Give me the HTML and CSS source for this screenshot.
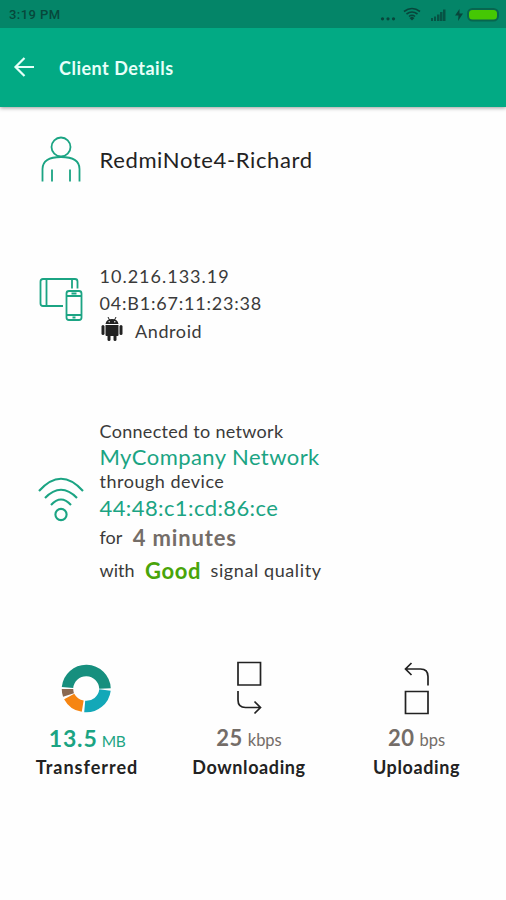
FILE: index.html
```html
<!DOCTYPE html>
<html lang="en">
<head>
<meta charset="utf-8">
<title>Client Details</title>
<link rel="stylesheet" href="styles.css">
</head>
<body>
<header class="header">
  <div class="status">
    <span class="clock">3:19 PM</span>
    <svg class="status-icons" width="124" height="28" viewBox="0 0 124 28">
      <g fill="#08463b"><circle cx="4.500" cy="18.800" r="1.600"/><circle cx="10" cy="18.800" r="1.600"/><circle cx="15.500" cy="18.800" r="1.600"/>
      <path d="M31.500 18L34 16.500L36.500 18L34 20.500Z"/>
      <path d="M53 18h2v3h-2zM56 16.500h2v4.500h-2zM59 14.500h2.500v6.500h-2.500zM62 12h2.500v9h-2.500zM65 9.500h2.500v11.500h-2.500z" opacity=".8"/>
      <path d="M81.500 9L77 15.500h3.500L80 21l5-7.500h-3.500z"/></g>
      <path d="M26 11.500Q34 5.500 42 11.500M28.500 14Q34 10 39.500 14M31 16.500Q34 14 37 16.500" fill="none" stroke="#08463b" stroke-width="1.600"/>
      <rect x="90" y="9" width="30" height="11.500" rx="4.500" fill="#45c804" stroke="#07664f" stroke-width="2"/>
    </svg>
  </div>
  <div class="bar">
    <svg width="22" height="22" viewBox="0 0 22 22" fill="none" stroke="#e5fff8" stroke-width="2.200"><path d="M21 11H3M11.500 2L2.500 11L11.500 20"/></svg>
    <h1 class="title">Client Details</h1>
  </div>
</header>
<main>
  <section class="row row-name">
    <svg class="icon" width="46" height="50" viewBox="0 0 46 50" fill="none" stroke="#1ba483" stroke-width="1.800"><circle cx="23" cy="12" r="9.500"/><path d="M4.500 46.500V34Q4.500 22 23 22Q41.500 22 41.500 34V46.500M14 34.500V46.500M32 34.500V46.500"/></svg>
    <div class="name">RedmiNote4-Richard</div>
  </section>
  <section class="row row-device">
    <svg class="icon" width="46" height="46" viewBox="0 0 46 46" fill="none" stroke="#1ba483" stroke-width="1.800"><path d="M25 29H5Q2.500 29 2.500 26.500V4.500Q2.500 2 5 2H37Q39.500 2 39.500 4.500V11.500M8.500 2V29M34 2V11.500"/><rect x="28.500" y="14" width="15" height="29" rx="2.500"/><path d="M28.500 19H43.500M28.500 38H43.500M33.500 16.500H38.500M34.500 40.500H37.500"/></svg>
    <div>
      <div class="line ip">10.216.133.19</div>
      <div class="line mac">04:B1:67:11:23:38</div>
      <div class="line os"><svg width="24" height="24" viewBox="0 0 24 24" fill="#222"><path d="M5.500 7Q6.300 2 12 2Q17.700 2 18.500 7ZM5.500 8H18.500V18Q18.500 19 17.500 19H6.500Q5.500 19 5.500 18Z"/><rect x="1.500" y="8" width="3" height="10" rx="1.500"/><rect x="19.500" y="8" width="3" height="10" rx="1.500"/><rect x="7.500" y="17" width="3" height="7" rx="1.500"/><rect x="13.500" y="17" width="3" height="7" rx="1.500"/><path d="M8 0L9.500 3M16 0L14.500 3" stroke="#222"/><circle cx="9.200" cy="4.800" r=".7" fill="#fff"/><circle cx="14.800" cy="4.800" r=".7" fill="#fff"/></svg><span class="os-name">Android</span></div>
    </div>
  </section>
  <section class="row row-network">
    <svg class="icon" width="46" height="46" viewBox="0 0 46 46" fill="none" stroke="#1ba483" stroke-width="2.100"><path d="M1 15Q23 -9.500 45 15M7 22Q23 5.500 39 22M13 29Q23 18 33 29"/><circle cx="23" cy="38.500" r="5.600"/></svg>
    <div>
      <div class="line l1">Connected to network</div>
      <div class="line l2">MyCompany Network</div>
      <div class="line l3">through device</div>
      <div class="line l4">44:48:c1:cd:86:ce</div>
      <div class="line l5"><span class="for">for</span><b class="time">4 minutes</b></div>
      <div class="line l6"><span class="with">with</span><b class="good">Good</b><span class="quality">signal quality</span></div>
    </div>
  </section>
  <section class="stats">
    <div class="stat transferred">
      <svg width="52" height="56" viewBox="0 0 52 56" fill="none" stroke-width="11.500"><path d="M6.500 27.500A18.800 18.800 0 0 1 44 28.500" stroke="#168f7e"/><path d="M44 30A18.800 18.800 0 0 1 23.700 46.500" stroke="#13a8b8"/><path d="M21.700 46.200A18.800 18.800 0 0 1 8.200 36.500" stroke="#f68512"/><path d="M7.500 35A18.800 18.800 0 0 1 6.500 29" stroke="#8b6951"/></svg>
      <div class="value"><b>13.5</b><span class="unit">MB</span></div>
      <div class="label">Transferred</div>
    </div>
    <div class="stat downloading">
      <svg width="52" height="56" viewBox="0 0 52 56" fill="none" stroke="#222" stroke-width="1.700"><path d="M15 2.500H37.500V25H15ZM15 31V40Q15 47.500 22.500 47.500H37M31.500 41.500L37.500 47.500L31.500 53.500"/></svg>
      <div class="value"><b>25</b><span class="unit">kbps</span></div>
      <div class="label">Downloading</div>
    </div>
    <div class="stat uploading">
      <svg width="52" height="56" viewBox="0 0 52 56" fill="none" stroke="#222" stroke-width="1.700"><path d="M14.500 31.500H37V53.500H14.500ZM37 25.500V16.500Q37 9 29.500 9H14.500M20.500 3L14.500 9L20.500 15"/></svg>
      <div class="value"><b>20</b><span class="unit">bps</span></div>
      <div class="label">Uploading</div>
    </div>
  </section>
</main>
</body>
</html>
```
FILE: styles.css
```css
* { box-sizing: border-box; }
body { margin: 0; height: 900px; background: #fefefe; color: #3a3a3a; font-family: Lato, "Liberation Sans", sans-serif; font-size: 18px; white-space: nowrap; }
svg { display: block; flex: none; }
.header { height: 107px; background: #02aa84; box-shadow: 0 1px 4px rgba(0,0,0,.4); }
.status { height: 28px; background: #048568; display: flex; justify-content: space-between; padding: 0 4px 0 9px; }
.clock { font: 500 13px/30px Roboto, sans-serif; color: #07483b; letter-spacing: .45px; }
.bar { height: 79px; display: flex; align-items: center; padding: 0 0 2px 13px; }
.title { margin: 3px 0 0 24px; color: #e8fff9; font-size: 18px; line-height: 24px; letter-spacing: .5px; }
.row { display: flex; padding-left: 38px; }
.icon { margin-right: 15.500px; }
.row-name { padding-top: 28px; height: 141px; }
.name { color: #222; font-size: 22px; line-height: 30px; margin-top: 10px; letter-spacing: .63px; }
.row-device { height: 171px; padding-top: 15px; }
.row-device .icon { margin-top: 14px; }
.line { display: flex; align-items: center; height: 27px; line-height: 27px; }
.ip { letter-spacing: 1px; }
.mac { letter-spacing: .8px; }
.os { height: 27px; margin-top: 1px; }
.os svg { margin: -6px 11.500px 0 0; }
.os-name { letter-spacing: .6px; }
.row-network { height: 241px; }
.row-network .icon { margin-top: 57px; }
.l1 { height: 24px; letter-spacing: .3px; }
.l2, .l4 { color: #1ba483; font-size: 22px; }
.l2 { height: 26px; letter-spacing: .43px; }
.l3 { height: 25px; letter-spacing: .5px; }
.l4 { height: 26px; letter-spacing: .4px; }
.l5 { height: 34px; }
.l6 { height: 32px; }
.time { color: #746d68; font-size: 22px; margin-left: 10.500px; letter-spacing: .85px; }
.good { color: #49a40a; font-size: 22px; margin: 0 9.500px 0 10.500px; letter-spacing: .6px; }
.quality { letter-spacing: .6px; }
.stats { display: flex; padding-left: 17px; }
.stat { width: 140px; display: flex; flex-direction: column; align-items: center; }
.downloading { width: 184px; }
.uploading { width: 151px; }
.value { display: flex; align-items: baseline; gap: 5px; height: 28px; margin-top: 8px; line-height: 28px; color: #746d68; }
.value b { font-size: 22px; letter-spacing: .5px; }
.unit { font-size: 16.500px; }
.transferred .value { color: #1ba483; gap: 4px; }
.transferred .value b { font-size: 23px; letter-spacing: .9px; }
.transferred .unit { font-size: 15.500px; letter-spacing: -.4px; }
.label { color: #222; font-size: 18px; font-weight: 700; line-height: 28px; height: 28px; margin-top: 1px; letter-spacing: .6px; }
.transferred .label { letter-spacing: 1px; }
```
